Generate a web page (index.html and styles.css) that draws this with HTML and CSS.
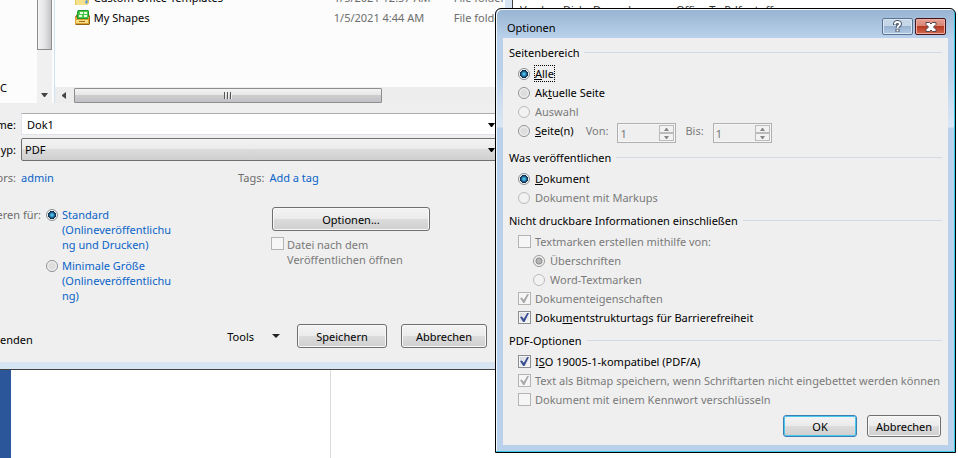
FILE: index.html
```html
<!DOCTYPE html>
<html lang="de">
<head>
<meta charset="utf-8">
<title>Optionen</title>
<link rel="stylesheet" href="styles.css">
</head>
<body>
<main class="desktop">
  <div class="word">
    <div class="word-rail"></div>
    <div class="word-pane"></div>
    <div class="word-doc"><span>Vorder</span><span>Disk</span><span>Demerk</span><span class="far">Office To Pdf</span><span>stuff</span></div>
  </div>

  <section class="save-window" aria-label="Speichern unter">
    <div class="save-body">
      <div class="browser">
        <div class="tree">C</div>
        <div class="vscroll">
          <div class="vthumb"></div>
          <svg width="7" height="4" viewBox="0 0 7 4"><path d="M0 0h7L4 4H3z" fill="#444"/></svg>
        </div>
        <div class="list">
          <div class="file">
            <svg class="file-icon" width="17" height="17" viewBox="0 0 17 17"><path d="M1 3h8l1 2h5v9l-2 2H1z" fill="#e9c65a"/><path d="M2 11h10l2 2-1 3H2z" fill="#f5e08c"/><path d="M12 11l2 1-1 3-2-1z" fill="#5b9bd5"/></svg>
            <span class="name">Custom Office Templates</span><span class="date">1/5/2021 12:57 AM</span><span class="type">File folder</span>
          </div>
          <div class="file">
            <svg class="file-icon" width="17" height="17" viewBox="0 0 17 17"><path d="M1 8l2-3h12l1 3v7l-1 1H2l-1-1z" fill="#8f6414"/><path d="M4 1h10l1 1v8H3V3z" fill="#1e9a2c"/><path d="M5 2h9v7H4V4z" fill="#49c94c"/><path d="M6 3h3v2H6zM10 3h3v2h-3zM5 6h3v2H5zM10 6h3v2h-3z" fill="#eaffdf"/><path d="M1 8h2v2h11V8h1v7H1z" fill="#dba236"/><path d="M2 11h12v3H2z" fill="#f8dc86"/><path d="M5 12h6v1H5z" fill="#a36b10"/></svg>
            <span class="name">My Shapes</span><span class="date">1/5/2021 4:44 AM</span><span class="type">File folder</span>
          </div>
          <div class="hscroll">
            <svg width="4" height="7" viewBox="0 0 4 7"><path d="M4 0v7L0 4V3z" fill="#444"/></svg>
            <div class="hthumb"><i></i><i></i><i></i></div>
          </div>
        </div>
      </div>

      <div class="fields">
        <label for="filename">me:</label>
        <div class="combo"><input id="filename" type="text" value="Dok1"><svg width="7" height="4" viewBox="0 0 7 4"><path d="M0 0h7L4 4H3z"/></svg></div>
        <label for="filetype">yp:</label>
        <div class="combo"><select id="filetype"><option>PDF</option></select><svg width="7" height="4" viewBox="0 0 7 4"><path d="M0 0h7L4 4H3z"/></svg></div>
      </div>

      <div class="meta">
        <div class="meta-item authors"><span>ors:</span><a href="#">admin</a></div>
        <div class="meta-item"><span>Tags:</span><a href="#">Add a tag</a></div>
      </div>

      <div class="publish">
        <div class="optimize-label">eren für:</div>
        <div class="optimize">
          <label><input type="radio" name="opt" checked><span>Standard<br>(Onlineveröffentlichu<br>ng und Drucken)</span></label>
          <label><input type="radio" name="opt"><span>Minimale Größe<br>(Onlineveröffentlichu<br>ng)</span></label>
        </div>
        <div class="after">
          <button type="button" class="btn">Optionen...</button>
          <label class="off"><input type="checkbox" disabled><span>Datei nach dem<br>Veröffentlichen öffnen</span></label>
        </div>
      </div>

      <div class="save-actions">
        <span class="hide">enden</span>
        <button type="button" class="tools">Tools <svg width="8" height="4" viewBox="0 0 8 4"><path d="M0 0h8L4 4z" fill="#222"/></svg></button>
        <button type="button" class="btn save">Speichern</button>
        <button type="button" class="btn cancel">Abbrechen</button>
      </div>
    </div>
  </section>

  <section class="options-window" aria-labelledby="options-title">
    <header class="caption">
      <h1 id="options-title">Optionen</h1>
      <button type="button" class="cap help" aria-label="Hilfe"><svg width="11" height="13" viewBox="0 0 11 13"><path d="M3 5V4a2.500 2 0 0 1 5 0c0 2-2.500 1.500-2.500 4M5.500 9v3" fill="none" stroke="#46546a" stroke-width="4"/><path d="M3 4.500V4a2.500 2 0 0 1 5 0c0 2-2.500 1.500-2.500 4M5.500 9.500v2" fill="none" stroke="#fff" stroke-width="2"/></svg></button>
      <button type="button" class="cap close" aria-label="Schließen"><svg width="12" height="10" viewBox="0 0 12 10"><path d="M1 .5h3.500L6 2 7.500.5H11v2L8.500 5 11 7.500v2H7.500L6 8 4.500 9.500H1v-2L3.500 5 1 2.500z" fill="#fff" stroke="#53444f"/></svg></button>
    </header>
    <form class="options">
      <fieldset>
        <legend><span>Seitenbereich</span></legend>
        <label><input type="radio" name="range" checked><span class="focus"><u>A</u>lle</span></label>
        <label><input type="radio" name="range"><span>Ak<u>t</u>uelle Seite</span></label>
        <label class="off"><input type="radio" name="range" disabled><span>Auswahl</span></label>
        <div class="pages">
          <label><input type="radio" name="range"><span><u>S</u>eite(n)</span></label>
          <label class="off from" for="from">Von:</label>
          <div class="spin"><input id="from" type="text" value="1" disabled><div class="steps"><button type="button" disabled aria-label="Mehr"><svg width="5" height="3" viewBox="0 0 5 3"><path d="M0 3h5L3 0H2z"/></svg></button><button type="button" disabled aria-label="Weniger"><svg width="5" height="3" viewBox="0 0 5 3"><path d="M0 0h5L3 3H2z"/></svg></button></div></div>
          <label class="off to" for="to">Bis:</label>
          <div class="spin"><input id="to" type="text" value="1" disabled><div class="steps"><button type="button" disabled aria-label="Mehr"><svg width="5" height="3" viewBox="0 0 5 3"><path d="M0 3h5L3 0H2z"/></svg></button><button type="button" disabled aria-label="Weniger"><svg width="5" height="3" viewBox="0 0 5 3"><path d="M0 0h5L3 3H2z"/></svg></button></div></div>
        </div>
      </fieldset>
      <fieldset>
        <legend><span>Was veröffentlichen</span></legend>
        <label><input type="radio" name="what" checked><span><u>D</u>okument</span></label>
        <label class="off"><input type="radio" name="what" disabled><span>Dokument mit Markups</span></label>
      </fieldset>
      <fieldset>
        <legend><span>Nicht druckbare Informationen einschließen</span></legend>
        <label class="off"><input type="checkbox" disabled><span>Textmarken erstellen mithilfe von:</span></label>
        <label class="off sub"><input type="radio" name="marks" disabled checked><span>Überschriften</span></label>
        <label class="off sub"><input type="radio" name="marks" disabled><span>Word-Textmarken</span></label>
        <label class="off"><input type="checkbox" disabled checked><span>Dokumenteigenschaften</span></label>
        <label><input type="checkbox" checked><span>Doku<u>m</u>entstrukturtags für Barrierefreiheit</span></label>
      </fieldset>
      <fieldset>
        <legend><span>PDF-Optionen</span></legend>
        <label><input type="checkbox" checked><span>I<u>S</u>O 19005-1-kompatibel (PDF/A)</span></label>
        <label class="off"><input type="checkbox" disabled checked><span>Text als Bitmap speichern, wenn Schriftarten nicht eingebettet werden können</span></label>
        <label class="off"><input type="checkbox" disabled><span>Dokument mit einem Kennwort verschlüsseln</span></label>
      </fieldset>
      <div class="actions">
        <button type="button" class="btn default">OK</button>
        <button type="button" class="btn">Abbrechen</button>
      </div>
    </form>
  </section>
</main>
</body>
</html>
```
FILE: styles.css
```css
* { box-sizing: border-box; }
body {
  margin: 0;
  font: 11px/15px "Noto Sans", "Open Sans", sans-serif;
  color: #000;
}
button, input, select { font: inherit; color: inherit; margin: 0; }
svg { display: block; flex: none; }
a { color: #0a64c8; text-decoration: none; }
label { display: flex; }
.off { color: #7a7a7a; }

.desktop { position: relative; min-height: 100vh; overflow: hidden; background: #fff; }

/* Word behind the dialogs */
.word { display: flex; min-height: 100vh; }
.word-rail { width: 11px; background: #2b579a; }
.word-pane { width: 320px; border-right: 1px solid #dcdcdc; }
.word-doc { flex: 1; display: flex; align-items: flex-start; gap: 8px; padding: 2px 0 0 189px; color: #333; white-space: nowrap; }
.word-doc .far { margin-left: 34px; }

/* Controls */
input[type="radio"], input[type="checkbox"] {
  appearance: none;
  flex: none;
  width: 12px;
  height: 12px;
  border: 1px solid #8a8f94;
}
input[type="radio"] {
  border-radius: 50%;
  background: radial-gradient(circle, #ddd 0 3px, #f8f8f8 5px);
}
input[type="radio"]:checked {
  background: radial-gradient(circle at 5px 5px, #4bbbe6 0 1px, #114b76 3px, #123 4px, #f4f4f4 4px);
}
input[type="radio"]:disabled { border-color: #bbb; background: #f2f2f2; }
input[type="radio"]:checked:disabled {
  border-color: #999;
  background: radial-gradient(circle, #b5b5b5 0 2px, #888 3px, #f4f4f4 4px);
}
input[type="checkbox"] {
  display: grid;
  place-items: center;
  width: 13px;
  height: 13px;
  background: linear-gradient(135deg, #d2d7dd, #fafafa);
  box-shadow: inset 0 0 0 1px #f6f6f6;
}
input[type="checkbox"]:disabled { border-color: #b4b4b4; background: #f6f6f6; }
input[type="checkbox"]:checked::before {
  content: "";
  width: 9px;
  height: 9px;
  background: #3b4f92;
  clip-path: polygon(0 45%, 20% 40%, 42% 65%, 80% 0, 100% 0, 50% 100%, 35% 100%);
}
input[type="checkbox"]:checked:disabled::before { background: #aaa; }
.btn {
  padding: 0;
  border: 1px solid #707070;
  border-radius: 3px;
  background: linear-gradient(#f2f2f2 0 10%, #ebebeb 48%, #dcdcdc 50%, #cfcfcf);
  box-shadow: inset 0 0 0 1px #f8f8f8;
}
.btn.default { border-color: #3c7fb1; box-shadow: inset 0 0 0 1px #48c8f0; }

/* Save dialog */
.save-window {
  position: absolute;
  top: 0;
  left: 0;
  width: 513px;
  padding: 0 7px 7px 0;
  background: #d7e4f2;
  border: solid #444;
  border-width: 0 1px 1px 0;
}
.save-body { background: #efefef; }
.browser { display: flex; height: 103px; overflow: hidden; background: #fcfcfc; }
.tree { width: 37px; padding-top: 80px; }
.vscroll {
  display: flex;
  flex-direction: column;
  align-items: center;
  justify-content: space-between;
  width: 15px;
  padding-bottom: 6px;
  background: #f0f0f0;
}
.vthumb {
  align-self: stretch;
  height: 50px;
  border: solid #8e8e8e;
  border-width: 0 1px 1px;
  background: linear-gradient(90deg, #f4f4f4, #e4e4e6 50%, #c4c4c8);
}
.list { flex: 1; display: flex; flex-direction: column; margin-left: 2px; border-left: 1px solid #cfe2f2; }
.file {
  display: grid;
  grid-template-columns: 17px 243px 120px 1fr;
  align-items: center;
  height: 20px;
  padding-left: 19px;
  white-space: nowrap;
}
.file:first-child { margin-top: -13px; }
.file .name { padding-left: 3px; }
.date, .type { color: #6d6d6d; }
.hscroll { display: flex; align-items: center; gap: 8px; height: 16px; margin-top: auto; padding-left: 7px; background: #ededed; }
.hthumb {
  display: flex;
  align-items: center;
  justify-content: center;
  gap: 1px;
  width: 308px;
  height: 15px;
  border: 1px solid #8e8e8e;
  border-radius: 1px;
  background: linear-gradient(#f3f3f3, #e6e6e6 48%, #cdcdd0 50%, #c2c2c6);
}
.hthumb i { width: 2px; height: 7px; border-left: 1px solid #555; background: #eee; }

.fields {
  display: grid;
  grid-template-columns: 16px 1fr;
  gap: 3px 5px;
  align-items: center;
  padding: 10px 7px 0 0;
}
.fields label { justify-content: flex-end; }
.combo { position: relative; }
.combo input, .combo select {
  appearance: none;
  display: block;
  width: 100%;
  height: 22px;
  border: 1px solid #e2e3ea;
  border-top-color: #abadb3;
  border-radius: 0;
  padding: 0 5px;
  background: #fff;
}
.combo select {
  height: 23px;
  padding: 0 3px;
  border-color: #707070;
  border-radius: 2px;
  background: linear-gradient(#f2f2f2, #ebebeb 48%, #dcdcdc 50%, #cfcfcf);
}
.combo svg { position: absolute; right: 3px; top: 10px; }

.meta { display: flex; padding-top: 9px; }
.meta-item { display: flex; gap: 5px; }
.meta-item span { color: #6d6d6d; }
.meta-item.authors { width: 238px; }
.authors span { display: flex; justify-content: flex-end; width: 16px; }

.publish { display: flex; align-items: flex-start; padding-top: 22px; }
.optimize-label { width: 41px; display: flex; justify-content: flex-end; white-space: nowrap; color: #6d6d6d; }
.optimize { width: 230px; padding-left: 5px; color: #0a64c8; display: grid; gap: 6px; }
.optimize label { gap: 4px; }
.optimize input { margin-top: 2px; }
.after .btn { display: block; width: 158px; height: 24px; margin-left: 1px; }
.after label { gap: 3px; padding-top: 6px; }

.save-actions { display: flex; align-items: center; padding: 21px 18px 14px 0; }
.hide { padding-top: 6px; margin-right: auto; }
.save-actions .btn { width: 90px; height: 24px; }
.save-actions .cancel { width: 86px; margin-left: 14px; }
.tools { display: flex; align-items: center; gap: 18px; margin-right: 17px; padding: 0; border: 0; background: none; }

/* Options dialog */
.options-window {
  position: absolute;
  top: 8px;
  left: 495px;
  right: 2px;
  padding: 0 7px 7px 6px;
  border: 1px solid #000;
  border-radius: 6px 6px 0 0;
  box-shadow: inset -1px -1px 0 #38c8ea, inset 1px 1px 0 #f2f8fc;
  background: linear-gradient(#98b4d2, #b9d1ea 29px, #b9d1ea 60px, #dbe7f5 118px, #b9d1ea 119px);
}
.caption { display: flex; align-items: flex-start; height: 29px; padding: 9px 2px 0 5px; gap: 2px; }
h1 { margin: 2px auto 0 0; font: inherit; }
.cap {
  display: grid;
  place-items: center;
  width: 31px;
  height: 17px;
  padding: 0;
  border: 1px solid #5c7390;
  border-radius: 2px;
  background: linear-gradient(#c5d6e9 48%, #98b3d2 50%, #b3cae3);
  box-shadow: inset 0 0 0 1px #d8e5f3;
}
.close { border-color: #45121a; background: linear-gradient(#e5a092, #d98472 48%, #b83921 50%, #d06a50); box-shadow: inset 0 0 0 1px #eab0a4; }
.options { padding: 5px 6px 8px; margin-left: 1px; background: #efefef; }
fieldset { min-width: 0; margin: 0 0 4px; padding: 0; border: 0; }
legend { display: flex; align-items: center; gap: 5px; width: 100%; height: 19px; margin-bottom: 2px; padding: 0; white-space: nowrap; }
legend::after { content: ""; flex: 1; height: 1px; background: #d2dbe3; }
fieldset label { align-items: center; gap: 4px; height: 19px; padding-left: 9px; white-space: nowrap; }
fieldset input[type="radio"] { margin-right: 1px; }
fieldset .sub { padding-left: 24px; }
.focus { outline: 1px dotted #000; }
.pages { display: flex; height: 23px; }
.pages .from { padding-left: 12px; margin-right: 9px; }
.pages .to { margin-right: 9px; }
.spin { display: flex; width: 59px; height: 20px; margin-top: 2px; padding: 1px; border: 1px solid #b0b0b0; background: #f6f6f6; }
.spin input { flex: 1; min-width: 0; padding: 0 1px; border: 0; background: #efefef; color: #777; }
.steps { display: grid; grid-template-rows: 1fr 1fr; width: 15px; }
.steps button { display: grid; place-items: center; padding: 0; border: 1px solid #bbb; background: #f2f2f2; }
.steps path { fill: #888; }
.actions { display: flex; justify-content: flex-end; gap: 10px; padding: 2px 1px 0 0; }
.actions .btn { width: 74px; height: 22px; }
```
